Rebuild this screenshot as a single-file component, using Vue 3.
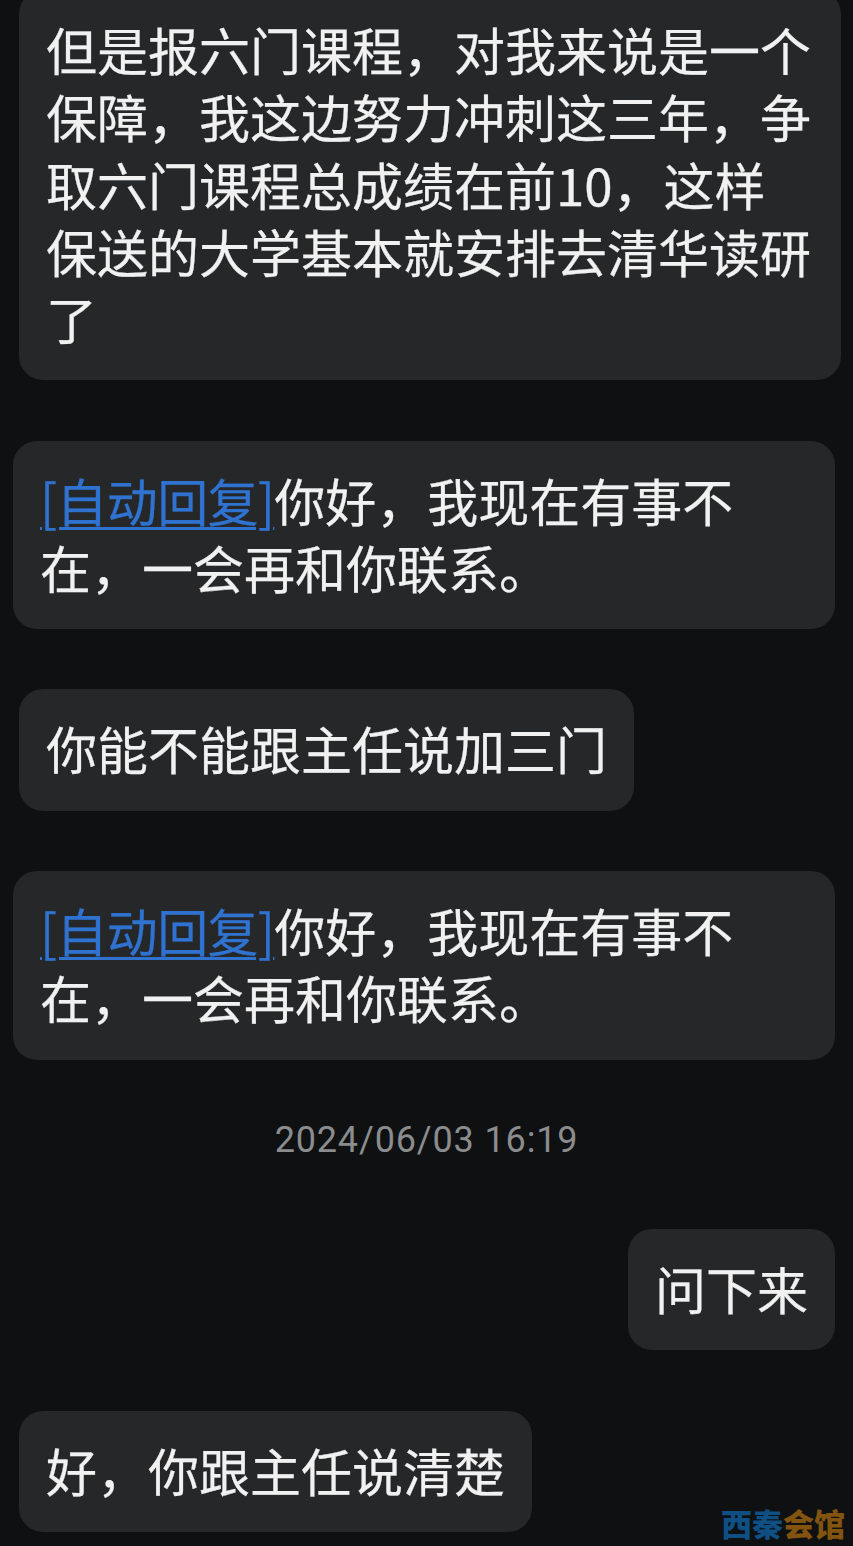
<script setup>
const auto = '[自动回复]'
const reply = '你好，我现在有事不在，一会再和你联系。'
</script>

<template>
  <main class="chat">
    <p class="bubble wide first">但是报六门课程，对我来说是一个保障，我这边努力冲刺这三年，争取六门课程总成绩在前10，这样保送的大学基本就安排去清华读研了</p>
    <p class="bubble wide auto"><a class="link">{{ auto }}</a>{{ reply }}</p>
    <p class="bubble left">你能不能跟主任说加三门</p>
    <p class="bubble wide auto"><a class="link">{{ auto }}</a>{{ reply }}</p>
    <time class="stamp">2024/06/03 16:19</time>
    <p class="bubble mine">问下来</p>
    <p class="bubble left">好，你跟主任说清楚</p>
    <div class="mark"><span class="blue">西秦</span><span class="brown">会馆</span></div>
  </main>
</template>

<style>
html, body { margin: 0; background: #0e1012; }
</style>

<style scoped>
.chat {
  position: relative;
  height: 1546px;
  overflow: hidden;
  background: #0e1012;
  display: flex;
  flex-direction: column;
  align-items: flex-start;
  font-family: "Noto Sans CJK SC", "Noto Sans", sans-serif;
}
.bubble {
  box-sizing: border-box;
  margin: 60.2px 0 0 19px;
  padding: 26px 27px 28px;
  border-radius: 24px;
  background: #252729;
  color: #f1f1f1;
  font-size: 51px;
  line-height: 67.3px;
  -webkit-text-stroke: 0.25px #f1f1f1;
}
.wide { width: 822px; }
.first { margin-top: -10px; }
.auto { margin-left: 13px; }
.mine { align-self: flex-end; margin: 0 18px 0 0; }
.mine + .left { margin-top: 60.4px; }
.link {
  color: #2f72cf;
  -webkit-text-stroke: 0.25px #2f72cf;
  letter-spacing: -0.7px;
  text-decoration: underline;
  text-decoration-thickness: 3px;
  text-underline-offset: 5px;
}
.stamp {
  align-self: center;
  margin: 57px 0 66.5px;
  color: #8a8c8e;
  font-family: Roboto, "Noto Sans", sans-serif;
  font-size: 36px;
  line-height: 46px;
  letter-spacing: 0.85px;
}
.mark {
  position: absolute;
  right: 8px;
  bottom: 6px;
  font-size: 31px;
  line-height: 34px;
  font-weight: 900;
  white-space: nowrap;
}
.blue { color: #0f4f83; }
.brown { color: #83540f; }
</style>
